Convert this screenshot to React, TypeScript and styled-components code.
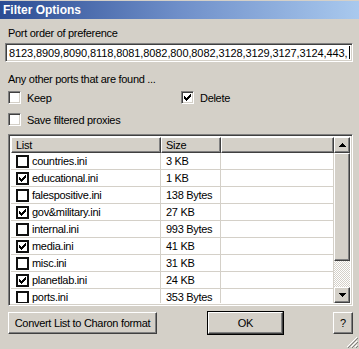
import styled, { createGlobalStyle, css } from "styled-components";

const GlobalStyle = createGlobalStyle`
    html, body {
        margin: 0;
        padding: 0;
        background: #d4d0c8;
    }
    * {
        box-sizing: border-box;
    }
`;

const raised = css`
    border-style: solid;
    border-width: 1px;
    border-color: #ffffff #404040 #404040 #ffffff;
    box-shadow: inset -1px -1px 0 #808080, inset 1px 1px 0 #d4d0c8;
`;

const sunken = css`
    border-style: solid;
    border-width: 1px;
    border-color: #808080 #ffffff #ffffff #808080;
    box-shadow: inset 1px 1px 0 #404040, inset -1px -1px 0 #d4d0c8;
`;

const Window = styled.div`
    position: relative;
    width: 359px;
    height: 349px;
    padding-top: 1px;
    background: #d4d0c8;
    font-family: "Liberation Sans", Arial, sans-serif;
    font-size: 11px;
    letter-spacing: -0.3px;
    color: #000;
    overflow: hidden;
`;

const TitleBar = styled.div`
    height: 18px;
    padding-left: 3px;
    display: flex;
    align-items: center;
    background: linear-gradient(to right, #2b4c93, #6f8fc9 50%, #a9c9ee);
    color: #fff;
    font-weight: bold;
    font-size: 12px;
    letter-spacing: 0;
`;

const Body = styled.div`
    padding: 8px 6px 0 8px;
    display: flex;
    flex-direction: column;
`;

const Label = styled.div<{ $top?: number }>`
    margin-top: ${({ $top }) => $top ?? 0}px;
    height: 13px;
    line-height: 13px;
    white-space: nowrap;
`;

const PortInput = styled.div`
    ${sunken};
    margin: 3px 0 0 -3px;
    width: 348px;
    height: 19px;
    background: #fff;
    padding: 0 0 0 3px;
    display: flex;
    align-items: center;
    white-space: nowrap;
    overflow: hidden;
    letter-spacing: -0.1px;
`;

const Caret = styled.span`
    display: inline-block;
    width: 1px;
    height: 13px;
    background: #000;
    margin-left: 1px;
`;

const OptionRow = styled.div<{ $top: number }>`
    margin-top: ${({ $top }) => $top}px;
    height: 17px;
    display: flex;
    align-items: center;
`;

const Option = styled.label<{ $width?: number }>`
    display: flex;
    align-items: center;
    gap: 6px;
    width: ${({ $width }) => ($width ? `${$width}px` : "auto")};
    white-space: nowrap;
`;

const DialogBox = styled.span`
    ${sunken};
    width: 13px;
    height: 13px;
    background: #fff;
    display: inline-flex;
    align-items: center;
    justify-content: center;
    flex-shrink: 0;
`;

const ListView = styled.div`
    ${sunken};
    margin-top: 6px;
    width: 345px;
    height: 172px;
    background: #fff;
    padding: 2px;
    display: flex;
`;

const Table = styled.div`
    flex: 1;
    display: flex;
    flex-direction: column;
    overflow: hidden;
`;

const HeaderRow = styled.div`
    display: flex;
    height: 16px;
    flex-shrink: 0;
`;

const HeaderCell = styled.div<{ $width?: number }>`
    ${raised};
    width: ${({ $width }) => ($width ? `${$width}px` : "auto")};
    flex: ${({ $width }) => ($width ? "none" : "1")};
    background: #d4d0c8;
    padding-left: 4px;
    display: flex;
    align-items: center;
    white-space: nowrap;
`;

const Row = styled.div`
    display: flex;
    height: 17px;
    border-bottom: 1px solid #d4d0c8;
    flex-shrink: 0;
`;

const Cell = styled.div<{ $width?: number }>`
    width: ${({ $width }) => ($width ? `${$width}px` : "auto")};
    flex: ${({ $width }) => ($width ? "none" : "1")};
    border-right: 1px solid #d4d0c8;
    display: flex;
    align-items: center;
    gap: 3px;
    padding-left: 5px;
    white-space: nowrap;
    overflow: hidden;
`;

const FlatBox = styled.span`
    width: 13px;
    height: 13px;
    border: 2px solid #101010;
    background: #fff;
    display: inline-flex;
    align-items: center;
    justify-content: center;
    flex-shrink: 0;
`;

const ScrollBar = styled.div`
    width: 16px;
    display: flex;
    flex-direction: column;
    background-color: #eeece8;
    background-image: repeating-conic-gradient(#d4d0c8 0 25%, #ffffff 0 50%);
    background-size: 2px 2px;
`;

const ScrollButton = styled.div`
    ${raised};
    height: 16px;
    background: #d4d0c8;
    display: flex;
    align-items: center;
    justify-content: center;
    flex-shrink: 0;
`;

const Thumb = styled.div`
    ${raised};
    height: 108px;
    background: #d4d0c8;
`;

const Spacer = styled.div`
    flex: 1;
`;

const ButtonRow = styled.div`
    margin-top: 6px;
    display: flex;
    align-items: center;
`;

const Button = styled.div<{ $width: number; $default?: boolean; $left?: number }>`
    ${raised};
    width: ${({ $width }) => $width}px;
    height: 22px;
    margin-left: ${({ $left }) => $left ?? 0}px;
    background: #d4d0c8;
    display: flex;
    align-items: center;
    justify-content: center;
    white-space: nowrap;
    ${({ $default }) =>
        $default &&
        css`
            outline: 1px solid #000;
            outline-offset: 0;
        `}
`;

const Grip = styled.svg`
    position: absolute;
    right: 1px;
    bottom: 1px;
`;

const Check = () => (
    <svg width="7" height="7" viewBox="0 0 7 7" shapeRendering="crispEdges">
        <path
            d="M0 2h1v1h1v1h1v-1h1v-1h1v-1h1v-1h1v3h-1v1h-1v1h-1v1h-1v1h-1v-1h-1v-1h-1z"
            fill="#000"
        />
    </svg>
);

const Arrow = ({ up }: { up?: boolean }) => (
    <svg width="7" height="4" viewBox="0 0 7 4" shapeRendering="crispEdges">
        <path d={up ? "M3 0h1v1h1v1h1v1h1v1h-7v-1h1v-1h1v-1h1z" : "M0 0h7v1h-1v1h-1v1h-1v1h-1v-1h-1v-1h-1v-1h-1z"} fill="#000" />
    </svg>
);

const files = [
    { name: "countries.ini", size: "3 KB", on: false },
    { name: "educational.ini", size: "1 KB", on: true },
    { name: "falespositive.ini", size: "138 Bytes", on: false },
    { name: "gov&military.ini", size: "27 KB", on: true },
    { name: "internal.ini", size: "993 Bytes", on: false },
    { name: "media.ini", size: "41 KB", on: true },
    { name: "misc.ini", size: "31 KB", on: false },
    { name: "planetlab.ini", size: "24 KB", on: true },
    { name: "ports.ini", size: "353 Bytes", on: false },
];

export default function App() {
    return (
        <Window>
            <GlobalStyle />
            <TitleBar>Filter Options</TitleBar>
            <Body>
                <Label>Port order of preference</Label>
                <PortInput>
                    8123,8909,8090,8118,8081,8082,800,8082,3128,3129,3127,3124,443,
                    <Caret />
                </PortInput>
                <Label $top={11}>Any other ports that are found ...</Label>
                <OptionRow $top={3}>
                    <Option $width={173}>
                        <DialogBox />
                        Keep
                    </Option>
                    <Option>
                        <DialogBox>
                            <Check />
                        </DialogBox>
                        Delete
                    </Option>
                </OptionRow>
                <OptionRow $top={5}>
                    <Option>
                        <DialogBox />
                        Save filtered proxies
                    </Option>
                </OptionRow>
                <ListView>
                    <Table>
                        <HeaderRow>
                            <HeaderCell $width={150}>List</HeaderCell>
                            <HeaderCell $width={60}>Size</HeaderCell>
                            <HeaderCell />
                        </HeaderRow>
                        {files.map((f) => (
                            <Row key={f.name}>
                                <Cell $width={150}>
                                    <FlatBox>{f.on && <Check />}</FlatBox>
                                    {f.name}
                                </Cell>
                                <Cell $width={60}>{f.size}</Cell>
                                <Cell />
                            </Row>
                        ))}
                    </Table>
                    <ScrollBar>
                        <ScrollButton>
                            <Arrow up />
                        </ScrollButton>
                        <Thumb />
                        <Spacer />
                        <ScrollButton>
                            <Arrow />
                        </ScrollButton>
                    </ScrollBar>
                </ListView>
                <ButtonRow>
                    <Button $width={149}>Convert List to Charon format</Button>
                    <Button $width={75} $left={51} $default>
                        OK
                    </Button>
                    <Button $width={20} $left={50}>
                        ?
                    </Button>
                </ButtonRow>
            </Body>
            <Grip width="12" height="12" viewBox="0 0 12 12">
                <path d="M11 1L1 11M11 5L5 11M11 9L9 11" stroke="#ffffff" strokeWidth="1" />
                <path d="M12 1L1 12M12 5L5 12M12 9L9 12" stroke="#808080" strokeWidth="1" transform="translate(0.5 0.5)" />
            </Grip>
        </Window>
    );
}
